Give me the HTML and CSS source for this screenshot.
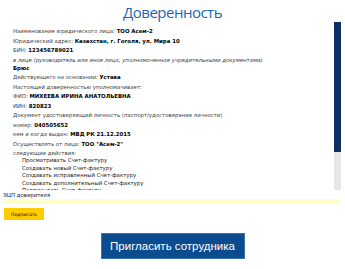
FILE: index.html
```html
<!DOCTYPE html>
<html>
  <head>
    <meta charset="UTF-8">
    <title>Доверенность</title>
    <link rel="stylesheet" href="styles.css">
  </head>
  <body>
    <div class="page">
      <h1 class="title">Доверенность</h1>
      <div class="doc">
        <div class="doc-body">
          <p>Наименование юридического лица: <b>ТОО Асем-2</b></p>
          <p>Юридический адрес: <b>Казахстан, г. Гоголя, ул. Мира 10</b></p>
          <p>БИН: <b>123456789021</b></p>
          <p><i>в лице (руководитель или иное лицо, уполномоченное учредительными документами)</i><br><b>Брюс</b></p>
          <p>Действующего на основании: <b>Устава</b></p>
          <p>Настоящей доверенностью уполномачивает:</p>
          <p>ФИО: <b>МИХЕЕВА ИРИНА АНАТОЛЬЕВНА</b></p>
          <p>ИИН: <b>820823</b></p>
          <p>Документ удостоверяющий личность (паспорт/удостоверение личности)</p>
          <p>номер: <b>040505652</b></p>
          <p>кем и когда выдан: <b>МВД РК 21.12.2015</b></p>
          <p>Осуществлять от лица: <b>ТОО "Асем-2"</b></p>
          <div class="actions">
            следующие действия:
            <ul>
              <li>Просматривать Счет-фактуру</li>
              <li>Создавать новый Счет-фактуру</li>
              <li>Создавать исправленный Счет-фактуру</li>
              <li>Создавать дополнительный Счет-фактуру</li>
              <li>Подписывать Счет-фактуру</li>
            </ul>
          </div>
        </div>
        <div class="scrollbar">
          <div class="thumb"></div>
          <div class="track"></div>
        </div>
      </div>
      <div class="sign-label">ЭЦП доверителя</div>
      <div class="sign-field"></div>
      <button class="sign-btn">Подписать</button>
      <div class="invite">
        <button class="invite-btn">Пригласить сотрудника</button>
      </div>
    </div>
  </body>
</html>
```

FILE: styles.css
```css
body {
  margin: 0;
  font-family: "DejaVu Sans", Verdana, sans-serif;
  background: #fff;
}
.page {
  padding: 0 4px 0 4px;
}
.title {
  margin: 0;
  height: 22px;
  line-height: 24px;
  text-align: center;
  font-family: "Open Sans", sans-serif;
  font-weight: normal;
  font-size: 15px;
  letter-spacing: -0.5px;
  color: #2166b0;
}
.doc {
  display: flex;
  height: 168px;
}
.doc-body {
  flex: 1;
  overflow: hidden;
  padding: 5px 0 0 9px;
  font-size: 5.4px;
  color: #444;
}
.scrollbar {
  width: 7px;
  display: flex;
  flex-direction: column;
}
.thumb {
  height: 130px;
  background: #0d2f66;
}
.track {
  flex: 1;
  background: #e6e6e6;
}
.doc p {
  margin: 0 0 1.5px;
  line-height: 8px;
}
.doc b {
  color: #000;
}
.actions {
  line-height: 8px;
}
.actions ul {
  list-style: none;
  margin: 0;
  padding: 0 0 0 9px;
}
.actions li {
  line-height: 7.6px;
  color: #222;
}
.sign-label {
  font-size: 5.4px;
  line-height: 7px;
  height: 7px;
  margin: 2px 0 0 -1px;
  color: #222;
}
.sign-field {
  height: 5px;
  margin: 0 1px 0 0;
  background: #ffffc8;
}
.sign-btn {
  display: block;
  margin-top: 4px;
  width: 40px;
  height: 12px;
  padding: 0;
  border: none;
  background: #ffcc00;
  font-family: "DejaVu Sans", sans-serif;
  font-size: 4.6px;
  color: #000;
}
.invite {
  display: flex;
  justify-content: center;
  margin-top: 13px;
}
.invite-btn {
  width: 144px;
  height: 26px;
  border: 1px solid #3b74b4;
  background: #0b4c8e;
  color: #fff;
  font-family: "Liberation Sans", Arial, sans-serif;
  font-size: 11.5px;
  padding: 0;
}
```
